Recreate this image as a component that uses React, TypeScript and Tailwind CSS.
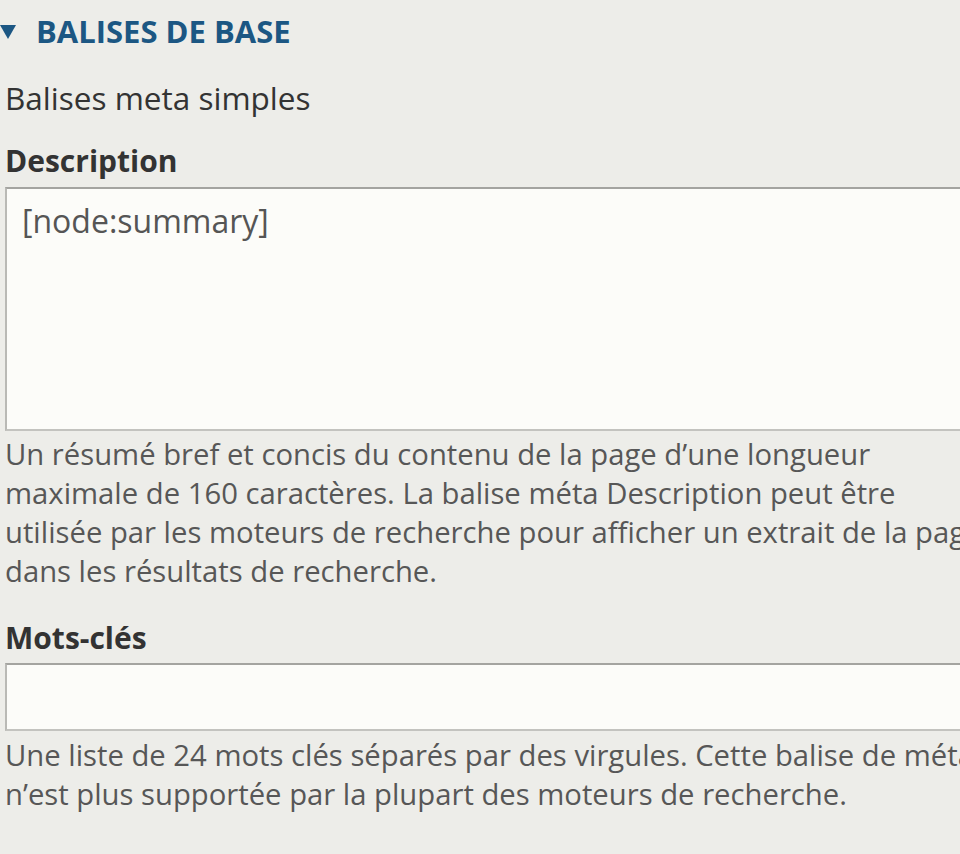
import React from "react";

const help =
  "text-[29.25px] leading-[39px] text-[#575757] [font-family:'Open_Sans',sans-serif]";

export default function App() {
  return (
    <div className="w-[960px] h-[854px] overflow-hidden bg-[#ededE9] [font-family:'Open_Sans',sans-serif] text-[#333]">
      <div className="w-[1000px] pl-[5px]">
        {/* fieldset legend */}
        <div className="flex items-center -ml-[5px] mt-[11px] h-[40px]">
          <svg width="16" height="14" viewBox="0 0 16 14" className="mt-[1px]">
            <polygon points="0,0 16,0 8,14" fill="#1c5783" />
          </svg>
          <span className="ml-[20px] text-[31px] leading-[40px] font-bold text-[#1c5783]">
            BALISES DE BASE
          </span>
        </div>

        <p className="mt-[27px] text-[31.5px] leading-[40px]">Balises meta simples</p>

        <label className="block mt-[23px] text-[30px] leading-[40px] font-bold text-[#333]">
          Description
        </label>
        <div className="mt-[6px] h-[244px] w-[995px] bg-[#fcfcf9] border-2 border-[#b9b9b5] border-t-[#a4a4a0] border-b-[#c3c3bf] pt-[12px] px-[15px] text-[32px] leading-[40px] text-[#555]">
          [node:summary]
        </div>
        <p className={`mt-[4px] w-[980px] ${help}`}>
          Un résumé bref et concis du contenu de la page d’une longueur maximale de 160
          caractères. La balise méta Description peut être utilisée par les moteurs de
          recherche pour afficher un extrait de la page dans les résultats de recherche.
        </p>

        <label className="block mt-[27px] text-[30px] leading-[40px] font-bold text-[#333]">
          Mots-clés
        </label>
        <div className="mt-[5px] h-[68px] w-[995px] bg-[#fcfcf9] border-2 border-[#b9b9b5] border-t-[#a4a4a0] border-b-[#c3c3bf]" />
        <p className={`mt-[5px] w-[980px] ${help}`}>
          Une liste de 24 mots clés séparés par des virgules. Cette balise de méta n’est
          plus supportée par la plupart des moteurs de recherche.
        </p>
      </div>
    </div>
  );
}
